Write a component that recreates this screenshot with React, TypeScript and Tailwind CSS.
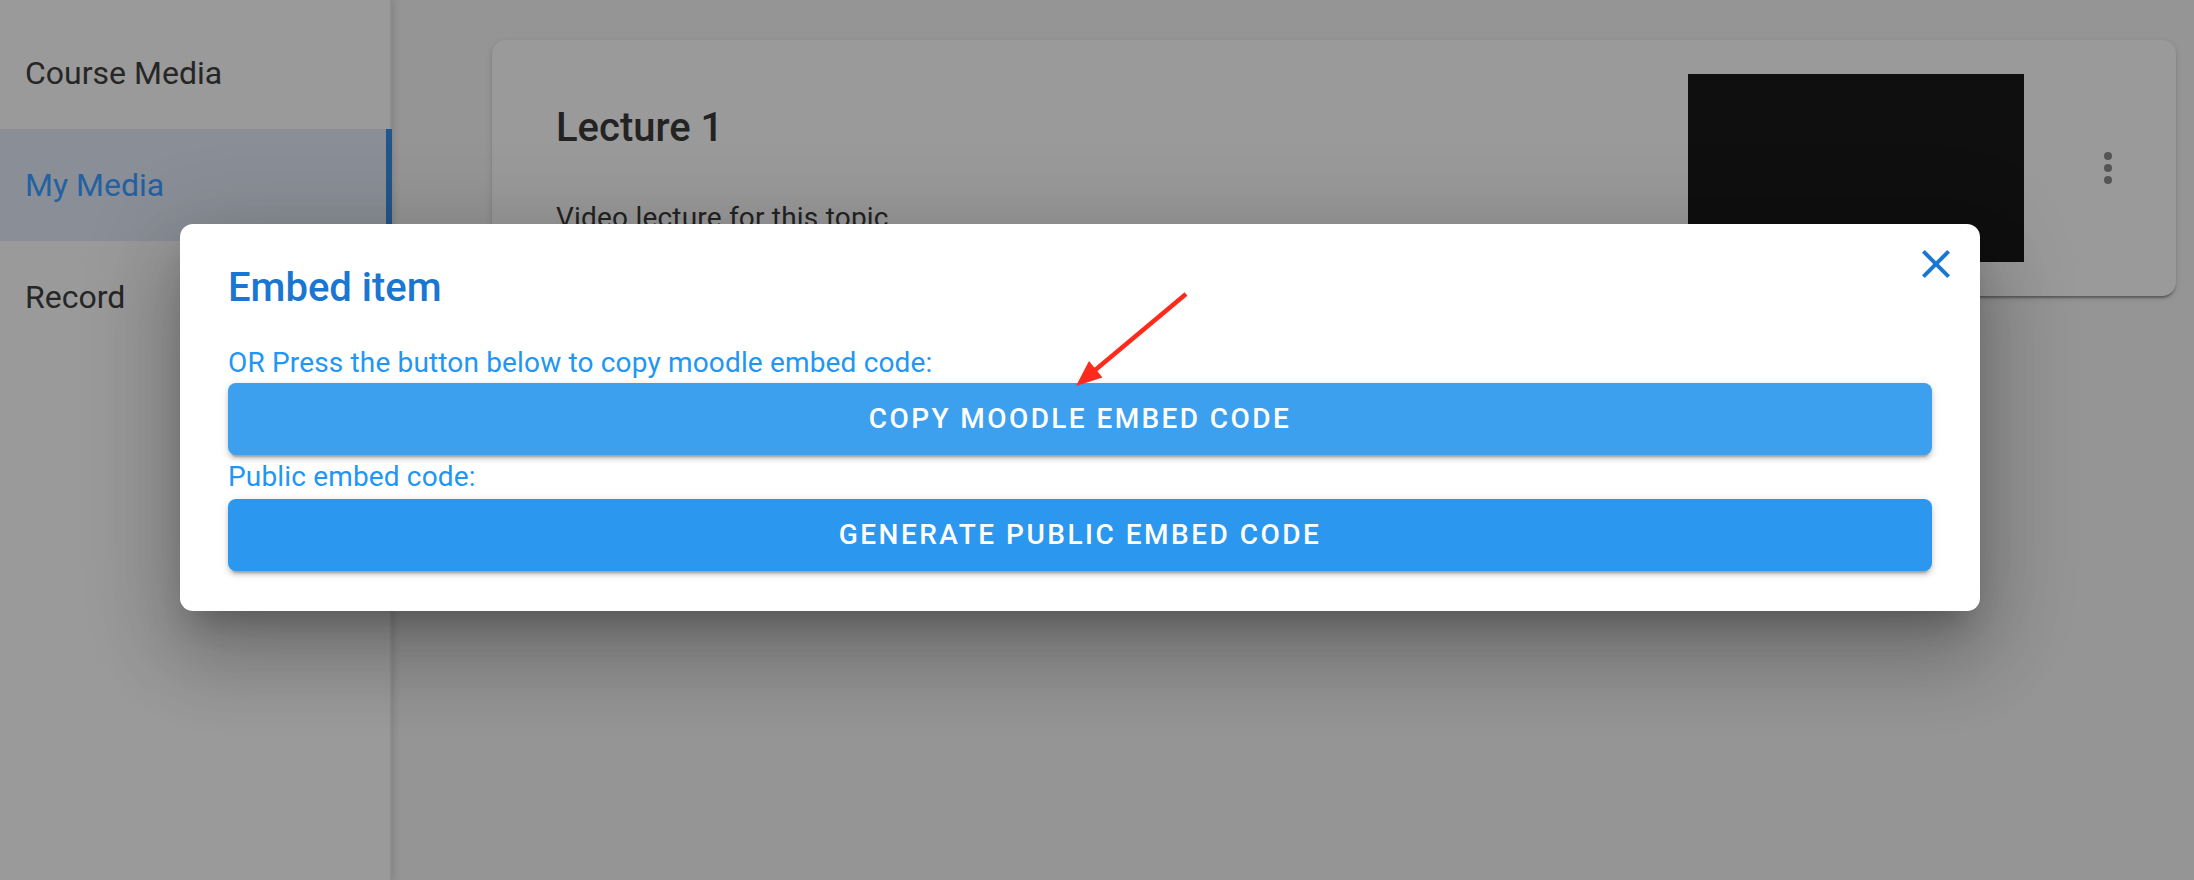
import React from "react";

const font = { fontFamily: "Roboto, 'Noto Sans', sans-serif" } as React.CSSProperties;

function Sidebar() {
  return (
    <div className="relative z-10 w-[392px] shrink-0 h-full bg-[#9a9a9a] border-r-2 border-[#8d8d8d] shadow-[2px_0_6px_rgba(0,0,0,0.12)] pt-[17px]">
      <div className="h-[112px] flex items-center pl-[25px] text-[32px] text-[#262626]">Course Media</div>
      <div className="h-[112px] flex items-center pl-[25px] text-[32px] text-[#2361a2] bg-[#8a8f97] border-r-[6px] border-[#22568a] -mr-[2px]">My Media</div>
      <div className="h-[112px] flex items-center pl-[25px] text-[32px] text-[#262626]">Record</div>
    </div>
  );
}

function Card() {
  return (
    <div className="ml-[100px] mr-[18px] mt-[40px] h-[256px] rounded-[14px] bg-[#9a9a9a] shadow-[0_4px_2px_-2px_rgba(0,0,0,0.2),0_2px_2px_0_rgba(0,0,0,0.14),0_2px_6px_0_rgba(0,0,0,0.12)] flex items-start overflow-hidden">
      <div className="flex-1 pl-[64px] pt-[64px] flex flex-col">
        <div className="text-[40px] leading-[48px] font-medium text-[#232323]">Lecture 1</div>
        <div className="mt-[46px] text-[28px] leading-[40px] tracking-[0.2px] text-[#232323]">Video lecture for this topic</div>
      </div>
      <div className="mt-[34px] w-[336px] h-[188px] bg-[#0f0f0f]" />
      <div className="ml-[60px] mr-[44px] mt-[104px] w-[48px] h-[48px] flex items-center justify-center">
        <svg width="48" height="48" viewBox="0 0 24 24" fill="#555555">
          <circle cx="12" cy="6" r="2" />
          <circle cx="12" cy="12" r="2" />
          <circle cx="12" cy="18" r="2" />
        </svg>
      </div>
    </div>
  );
}

function Dialog() {
  return (
    <div className="absolute inset-0 z-20 pl-[180px] pt-[224px]">
      <div className="relative w-[1800px] rounded-[13px] bg-white px-[48px] pt-[40px] pb-[40px] shadow-[0_22px_30px_-14px_rgba(0,0,0,0.24),0_48px_76px_6px_rgba(0,0,0,0.16),0_18px_92px_16px_rgba(0,0,0,0.14)]">
        <button className="absolute right-[20px] top-[16px] w-[48px] h-[48px] flex items-center justify-center">
          <svg width="48" height="48" viewBox="0 0 24 24" fill="#1976d2">
            <path d="M19 6.41 17.59 5 12 10.59 6.41 5 5 6.41 10.59 12 5 17.59 6.41 19 12 13.41 17.59 19 19 17.59 13.41 12z" />
          </svg>
        </button>
        <div className="text-[40px] leading-[48px] font-medium text-[#1976d2]">Embed item</div>
        <div className="mt-[31px] text-[28px] leading-[40px] tracking-[0.16px] text-[#2196f3]">OR Press the button below to copy moodle embed code:</div>
        <button className="w-full h-[72px] rounded-[8px] bg-[#3ca0ef] text-white text-[28px] font-medium tracking-[2.4px] uppercase shadow-[0_6px_2px_-4px_rgba(0,0,0,0.2),0_4px_4px_0_rgba(0,0,0,0.14),0_2px_10px_0_rgba(0,0,0,0.12)]">
          Copy moodle embed code
        </button>
        <div className="mt-[2px] text-[28px] leading-[40px] tracking-[0.16px] text-[#2196f3]">Public embed code:</div>
        <button className="mt-[2px] w-full h-[72px] rounded-[8px] bg-[#2b97ee] text-white text-[28px] font-medium tracking-[2.5px] uppercase shadow-[0_6px_2px_-4px_rgba(0,0,0,0.2),0_4px_4px_0_rgba(0,0,0,0.14),0_2px_10px_0_rgba(0,0,0,0.12)]">
          Generate public embed code
        </button>
      </div>
    </div>
  );
}

function Arrow() {
  return (
    <svg className="absolute inset-0 z-30 pointer-events-none" width="2194" height="880" viewBox="0 0 2194 880">
      <line x1="1186" y1="294" x2="1094" y2="371" stroke="#ff2a1c" strokeWidth="4.5" />
      <polygon points="1076,386 1102.5,377.5 1089,361" fill="#ff2a1c" />
    </svg>
  );
}

export default function App() {
  return (
    <div style={font} className="relative w-[2194px] h-[880px] overflow-hidden bg-[#959595] flex">
      <Sidebar />
      <div className="flex-1 bg-[#959595]">
        <Card />
      </div>
      <Dialog />
      <Arrow />
    </div>
  );
}
